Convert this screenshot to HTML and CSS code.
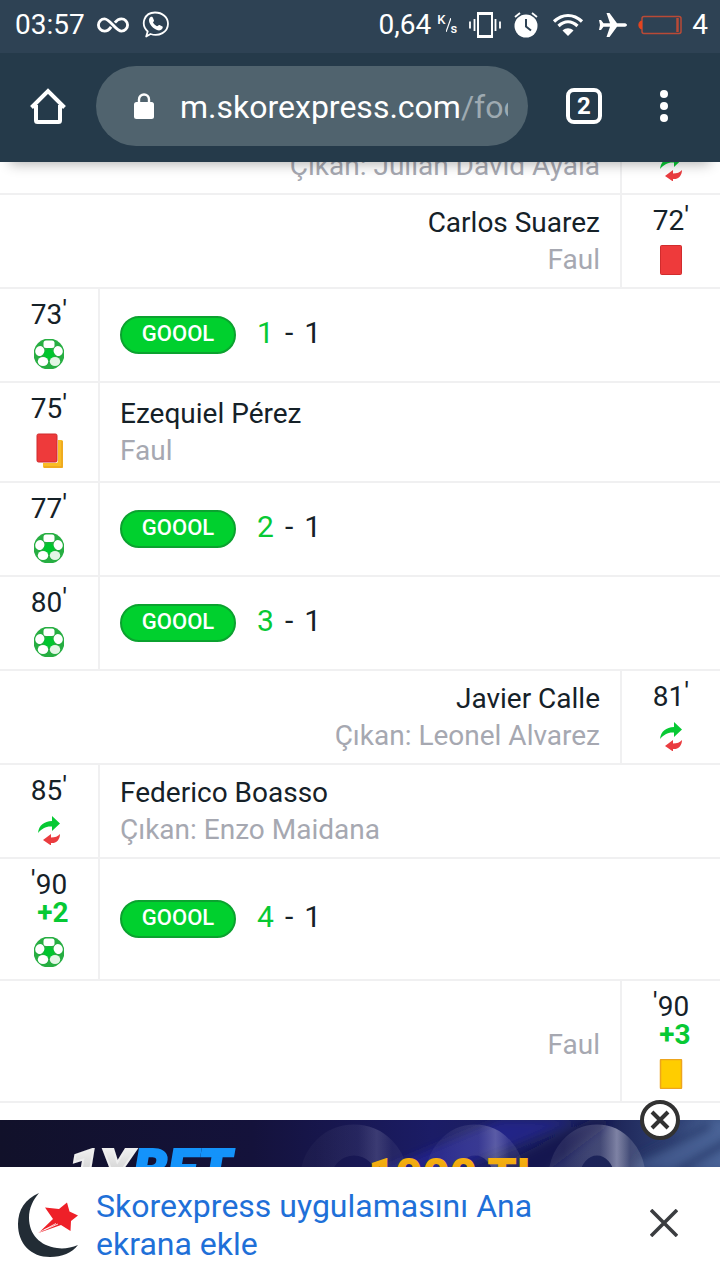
FILE: index.html
```html
<!DOCTYPE html>
<html lang="tr">
<head>
<meta charset="utf-8">
<meta name="viewport" content="width=device-width, initial-scale=1">
<title>Skorexpress</title>
<link rel="stylesheet" href="styles.css">
</head>
<body>
<svg class="defs" width="0" height="0" aria-hidden="true">
  <defs>
    <clipPath id="ball-edge"><circle cx="15" cy="15" r="15.500"/></clipPath>
    <symbol id="ball" viewBox="0 0 30 30">
      <g clip-path="url(#ball-edge)">
        <rect width="30" height="30" fill="#27ae42"/>
        <path d="M15 9l6 4.500-2.300 7h-7.400L9 13.500z" fill="#00c52e"/>
        <g fill="#fff">
          <rect x="9.500" y="1.500" width="11" height="7.500" rx="2.500"/>
          <ellipse cx="5.800" cy="12" rx="4.500" ry="5" transform="rotate(20 5.800 12)"/>
          <ellipse cx="24.200" cy="12" rx="4.500" ry="5" transform="rotate(-20 24.200 12)"/>
          <ellipse cx="9" cy="22.500" rx="5.200" ry="4.500"/>
          <ellipse cx="21" cy="22.500" rx="5.200" ry="4.500" fill="#e3f6e5"/>
        </g>
      </g>
    </symbol>
    <symbol id="swap" viewBox="0 0 30 30">
      <path d="M4 18C5 10 10 6.500 18 6V1l8 7.500-8 7.500v-4.500c-6-.5-10 2-14 6.500z" fill="#07c934"/>
      <path d="M26 19c0 6-4 9.500-9 9V30.500L9 25l8-6v3.500c4 0 7-1 9-3.500z" fill="#ea3c3f"/>
    </symbol>
    <symbol id="red" viewBox="0 0 30 30">
      <rect x="4.500" y=".5" width="21" height="29" rx="1" fill="#ee3a3b" stroke="#d12c2d"/>
    </symbol>
    <symbol id="yellow" viewBox="0 0 30 30">
      <rect x="4.500" y=".5" width="21" height="29" rx="1" fill="#ffcd00" stroke="#eda51d" stroke-width="1.500"/>
    </symbol>
    <symbol id="second" viewBox="0 0 30 36">
      <rect x="9" y="7" width="20" height="28" rx="1.500" fill="#f9bd25"/>
      <path d="M10 34h18V8" fill="none" stroke="#eba51f" stroke-width="1.500"/>
      <rect x="2" y="0" width="22" height="30" rx="2" fill="#fff"/>
      <rect x="3" y="1" width="20" height="28" rx="1.500" fill="#ee3a3b" stroke="#cf2b2d"/>
    </symbol>
  </defs>
</svg>

<header class="status">
  <div class="status-group">
    <span>03:57</span>
    <svg class="infinity" width="32" height="18" viewBox="0 0 34 18" fill="none" stroke="#fff" stroke-width="3"><path d="M15 11c-2 3-4 4.500-7 4.500a6.500 6.500 0 0 1 0-13c6 0 12 13 18 13a6.500 6.500 0 0 0 0-13c-3 0-5 1.500-7 4"/></svg>
    <svg width="28" height="28" viewBox="0 0 28 28"><path d="M5.200 25.500l1.500-5C-1 13 3.500 1.500 14 1.500c7.500 0 13 4.800 13 11.300C27 21 18 26 9.500 23z" fill="none" stroke="#fff" stroke-width="1.800" stroke-linejoin="round"/><path d="M8.500 7c1.500-2 3-1.500 3.500 0l1 2.500c0 1-1 1.500-1 2 1 2 2.500 3 4 3.700.8 0 1.500-1.700 2.500-1.200l3 1.500c1 1-1 4-3.500 4C13 19 6 12 8.500 7z" fill="#fff"/></svg>
  </div>
  <div class="status-group status-right">
    <span>0,64</span>
    <span class="unit"><span class="unit-top">K</span><svg width="5" height="14" viewBox="0 0 5 14"><path d="M0 14L5 0" stroke="#fff" stroke-width="1.200"/></svg><span class="unit-bottom">s</span></span>
    <svg class="vibrate" width="32" height="26" viewBox="0 0 32 26" fill="none" stroke="#fff"><rect x="9" y="2" width="14" height="22" stroke-width="2"/><path d="M8 1.500h16M8 24.500h16" stroke-width="3"/><path d="M5.500 7v12M1 9.500v7M26.500 7v12M31 9.500v7" stroke-width="1.800"/></svg>
    <svg class="alarm" width="24" height="26" viewBox="0 0 24 26"><circle cx="12" cy="14" r="11.500" fill="#fff"/><path d="M1 5l5-4M23 5l-5-4" stroke="#fff" stroke-width="1.800"/><path d="M12 7v7.500l5 4" fill="none" stroke="#2e4254" stroke-width="2"/></svg>
    <svg class="wifi" width="32" height="24" viewBox="0 0 32 24" fill="none" stroke="#fff" stroke-width="3.200"><path d="M2 8.500c8.500-8 19.500-8 28 0M6.500 13c6-5.500 13-5.500 19 0"/><path d="M10.500 17.500c3.500-3 7.500-3 11 0L16 23z" fill="#fff" stroke="none"/></svg>
    <svg class="plane" width="30" height="24" viewBox="0 0 30 24"><path d="M29 12c0 1.200-1.500 1.800-3 1.800h-7L11.500 24H8.500l3.500-10.200H5.500L3 17H1l1-5-1-5h2l2.500 3.200H12L8.500 0h3L19 10.200h7c1.500 0 3 .6 3 1.800z" fill="#fff"/></svg>
    <svg class="battery" width="44" height="20" viewBox="0 0 44 20"><rect x="4" y="1.500" width="39" height="17" rx="2" fill="none" stroke="#b94a36" stroke-width="1.500"/><path d="M39.500 3v14" stroke="#b94a36" stroke-width="2.500"/><path d="M3.500 6v8C0 14 0 6 3.500 6z" fill="#e5441f" stroke="#e5441f"/></svg>
    <span>4</span>
  </div>
</header>

<nav class="toolbar">
  <button class="icon-button home" aria-label="Ana sayfa"><svg width="36" height="36" viewBox="0 0 36 36" fill="none" stroke="#fff" stroke-width="4"><path d="M1.500 19.500L18 3l16.500 16.500"/><path d="M6 17v15.500a1.500 1.500 0 0 0 1.500 1.500h21a1.500 1.500 0 0 0 1.500-1.500V17"/></svg></button>
  <button class="address">
    <svg class="lock" width="20" height="27" viewBox="0 0 20 27"><rect x="0" y="9" width="20" height="17" rx="2.500" fill="#fff"/><path d="M5 10V6.500a5 5 0 0 1 10 0V10" fill="none" stroke="#fff" stroke-width="2.400"/></svg>
    <span class="url">m.skorexpress.com<span class="path">/foo</span></span>
  </button>
  <button class="tabs" aria-label="Sekmeler">2</button>
  <button class="icon-button more" aria-label="Menü"><svg width="8" height="32" viewBox="0 0 8 32" fill="#fff"><circle cx="4" cy="4" r="4"/><circle cx="4" cy="16" r="4"/><circle cx="4" cy="28" r="4"/></svg></button>
</nav>

<main class="events">
  <article class="event away">
    <div class="detail"><p class="note">Çıkan: Julián David Ayala</p></div>
    <div class="time"><svg class="mark"><use href="#swap"/></svg></div>
  </article>
  <article class="event away">
    <div class="detail"><p class="player">Carlos Suarez</p><p class="note">Faul</p></div>
    <div class="time"><span>72<i class="tick">'</i></span><svg class="mark"><use href="#red"/></svg></div>
  </article>
  <article class="event">
    <div class="time"><span>73<i class="tick">'</i></span><svg class="mark"><use href="#ball"/></svg></div>
    <div class="detail goal"><span class="badge">GOOOL</span><p class="score"><b>1</b><span>-</span><span>1</span></p></div>
  </article>
  <article class="event">
    <div class="time"><span>75<i class="tick">'</i></span><svg class="mark tall"><use href="#second"/></svg></div>
    <div class="detail"><p class="player">Ezequiel Pérez</p><p class="note">Faul</p></div>
  </article>
  <article class="event">
    <div class="time"><span>77<i class="tick">'</i></span><svg class="mark"><use href="#ball"/></svg></div>
    <div class="detail goal"><span class="badge">GOOOL</span><p class="score"><b>2</b><span>-</span><span>1</span></p></div>
  </article>
  <article class="event">
    <div class="time"><span>80<i class="tick">'</i></span><svg class="mark"><use href="#ball"/></svg></div>
    <div class="detail goal"><span class="badge">GOOOL</span><p class="score"><b>3</b><span>-</span><span>1</span></p></div>
  </article>
  <article class="event away">
    <div class="detail"><p class="player">Javier Calle</p><p class="note">Çıkan: Leonel Alvarez</p></div>
    <div class="time"><span>81<i class="tick">'</i></span><svg class="mark"><use href="#swap"/></svg></div>
  </article>
  <article class="event">
    <div class="time"><span>85<i class="tick">'</i></span><svg class="mark"><use href="#swap"/></svg></div>
    <div class="detail"><p class="player">Federico Boasso</p><p class="note">Çıkan: Enzo Maidana</p></div>
  </article>
  <article class="event">
    <div class="time"><span><i class="tick">'</i>90</span><b class="extra">+2</b><svg class="mark"><use href="#ball"/></svg></div>
    <div class="detail goal"><span class="badge">GOOOL</span><p class="score"><b>4</b><span>-</span><span>1</span></p></div>
  </article>
  <article class="event away">
    <div class="detail unnamed"><p class="note">Faul</p></div>
    <div class="time"><span><i class="tick">'</i>90</span><b class="extra">+3</b><svg class="mark"><use href="#yellow"/></svg></div>
  </article>
</main>

<aside class="ad">
  <a class="banner" href="#" aria-label="1XBET 1000 TL">
    <svg width="100%" height="100" viewBox="0 0 720 100" preserveAspectRatio="xMidYMin slice">
      <defs>
        <linearGradient id="night"><stop offset="0" stop-color="#11112a"/><stop offset=".35" stop-color="#14123b"/><stop offset=".6" stop-color="#1b1c66"/><stop offset=".85" stop-color="#1d2558"/><stop offset="1" stop-color="#3d5588"/></linearGradient>
        <linearGradient id="silver" x2="0" y2="1"><stop offset="0" stop-color="#fff"/><stop offset="1" stop-color="#aaa"/></linearGradient>
        <linearGradient id="gold" x2="0" y2="1"><stop offset="0" stop-color="#fdb916"/><stop offset="1" stop-color="#d88c00"/></linearGradient>
        <linearGradient id="shine"><stop offset="0" stop-color="#fff" stop-opacity=".08"/><stop offset=".55" stop-color="#ccd" stop-opacity=".22"/><stop offset=".8" stop-color="#dde" stop-opacity=".5"/><stop offset="1" stop-color="#fff" stop-opacity=".15"/></linearGradient>
        <filter id="soft" x="-20%" y="-50%" width="140%" height="200%"><feGaussianBlur stdDeviation="5"/></filter>
      </defs>
      <rect width="720" height="100" fill="url(#night)"/>
      <g filter="url(#soft)">
        <path d="M370 55L500 0h75L430 60z" fill="#2528a0" opacity=".6"/>
        <path d="M490 50L590 0h25l-80 60z" fill="#15124a" opacity=".7"/>
        <path d="M630 50l70-50h30v50z" fill="#526da3" opacity=".55"/>
        <path d="M640 40l70-35M670 55l60-35" stroke="#26376b" stroke-width="7"/>
      </g>
      <g fill="none" stroke="url(#shine)" stroke-width="31">
        <ellipse cx="354" cy="58" rx="38" ry="38" opacity=".35"/>
        <ellipse cx="475" cy="58" rx="34" ry="38" opacity=".6"/>
        <ellipse cx="597" cy="58" rx="33" ry="38"/>
      </g>
      <text class="brand" x="68" y="69"><tspan fill="url(#silver)" stroke="#eee">1X</tspan><tspan fill="#1493fa" stroke="#1493fa">BET</tspan></text>
      <text class="amount" x="368" y="71">1000 TL</text>
    </svg>
  </a>
  <button class="ad-close" aria-label="Reklamı kapat"><svg width="40" height="40" viewBox="0 0 40 40"><circle cx="20" cy="20" r="18" fill="#fff" stroke="#323232" stroke-width="4"/><path d="M12 12l16 16M28 12L12 28" stroke="#323232" stroke-width="4"/></svg></button>
</aside>

<footer class="install">
  <svg class="app-icon" width="64" height="66" viewBox="0 0 64 66"><path d="M22 1C8 7 1 18 1 32c0 20 13 33 32 33 12 0 22-4 28-12-7 3-15 4-21 3C23 54 12 42 12 26 12 16 16 8 22 1z" fill="#222c35"/><path d="M28 15.500l14 1.500 8-6.500 2.500 9L61 23.500l-7 5.500-.5 10L44 33l-22.500 8L36 27z" fill="#ee2028"/><path d="M22 40.500l17-9M27 38l14-6" stroke="#fff" stroke-width=".8"/></svg>
  <a class="install-link" href="#">Skorexpress uygulamasını Ana ekrana ekle</a>
  <button class="dismiss" aria-label="Kapat"><svg width="28" height="28" viewBox="0 0 28 28"><path d="M1 1l26 26M27 1L1 27" stroke="#3b3d40" stroke-width="3.600"/></svg></button>
</footer>
</body>
</html>
```

FILE: styles.css
```css
* { box-sizing: border-box; }

body {
  margin: 0;
  height: 100vh;
  display: flex;
  flex-direction: column;
  overflow: hidden;
  background: #fff;
  color: #152128;
  font-family: Roboto, "Noto Sans", sans-serif;
  font-size: 28px;
}

p { margin: 0; }
button { padding: 0; border: 0; background: none; color: inherit; font: inherit; }
a { text-decoration: none; }
svg { display: block; flex: none; }
.defs { position: absolute; }

.status {
  flex: none;
  height: 53px;
  padding: 0 12px 4px 15px;
  display: flex;
  align-items: center;
  justify-content: space-between;
  background: #2e4254;
  color: #fff;
}
.status-group { display: flex; align-items: center; gap: 12px; }
.status-right { gap: 0; }
.unit { display: flex; align-items: center; margin: 0 12px 0 6px; font-size: 13px; font-weight: 500; line-height: 14px; }
.unit-top { padding-bottom: 10px; }
.unit-bottom { padding-top: 8px; }
.alarm { margin-left: 13px; }
.wifi { margin-left: 14px; }
.plane { margin-left: 14px; }
.battery { margin: 0 10px; }

.toolbar {
  flex: none;
  position: relative;
  height: 109px;
  padding: 0 24px 3px 30px;
  display: flex;
  align-items: center;
  background: #253a4a;
  box-shadow: 0 12px 12px -10px rgba(0, 0, 0, .3);
  color: #fff;
}
.icon-button { flex: none; display: flex; justify-content: center; }
.more { width: 64px; }
.address {
  flex: 1;
  min-width: 0;
  height: 80px;
  margin: 0 38px 0 30px;
  padding: 0 20px 0 38px;
  display: flex;
  align-items: center;
  gap: 26px;
  border-radius: 40px;
  background: #50636e;
  font-size: 32px;
  text-align: left;
}
.url { flex: 1; min-width: 0; padding-top: 2px; overflow: hidden; white-space: nowrap; line-height: 44px; }
.path { color: #9eaab1; }
.tabs {
  flex: none;
  width: 36px;
  height: 36px;
  margin-right: 30px;
  border: 4px solid #fff;
  border-radius: 8px;
  font-size: 24px;
  font-weight: 700;
  line-height: 28px;
}

.events {
  flex: 1;
  min-height: 0;
  padding-bottom: 17px;
  display: flex;
  flex-direction: column;
  justify-content: flex-end;
  overflow: hidden;
}
.event { flex: none; display: flex; border-bottom: 2px solid #f0f0f1; }
.event:first-child .detail { justify-content: flex-end; padding-bottom: 9px; }
.time {
  flex: none;
  width: 100px;
  padding: 12px 0;
  display: flex;
  flex-direction: column;
  align-items: center;
  border-right: 2px solid #f0f0f1;
  line-height: 28px;
}
.away .time { border-right: 0; border-left: 2px solid #f0f0f1; }
.tick { font-style: normal; line-height: 0; vertical-align: 4px; }
.mark { width: 30px; height: 30px; margin-top: 10px; }
.tall { height: 36px; }
.extra { padding-left: 8px; color: #07c934; font-weight: 700; }
.detail {
  flex: 1;
  min-width: 0;
  padding: 0 20px;
  display: flex;
  flex-direction: column;
  justify-content: center;
  line-height: 37px;
}
.away .detail { text-align: right; }
.away .unnamed { padding-top: 6px; }
.note { color: #a6a8b1; }
.goal { flex-direction: row; align-items: center; justify-content: flex-start; gap: 21px; }
.badge {
  width: 116px;
  height: 38px;
  border: 2px solid #0ba22f;
  border-radius: 19px;
  background: #00d02e;
  color: #fff;
  font-size: 22px;
  font-weight: 500;
  line-height: 32px;
  text-align: center;
}
.score { display: flex; gap: 11px; padding-bottom: 5px; font-size: 30px; }
.score b { color: #07c934; font-weight: 400; }

.ad { flex: none; position: relative; height: 47px; }
.banner { display: block; height: 47px; overflow: hidden; }
.brand { font: italic 900 55px Roboto, sans-serif; stroke-width: 2px; }
.amount { font: 900 47px Roboto, sans-serif; fill: url(#gold); }
.ad-close { position: absolute; top: -20px; right: 40px; }

.install {
  flex: none;
  padding: 20px 42px 17px 17px;
  display: flex;
  align-items: center;
  background: #fff;
}
.install-link { flex: 1; max-width: 460px; margin: 0 auto 0 15px; color: #1f70d8; font-size: 32px; line-height: 38px; }
.dismiss { padding-bottom: 4px; }
```
